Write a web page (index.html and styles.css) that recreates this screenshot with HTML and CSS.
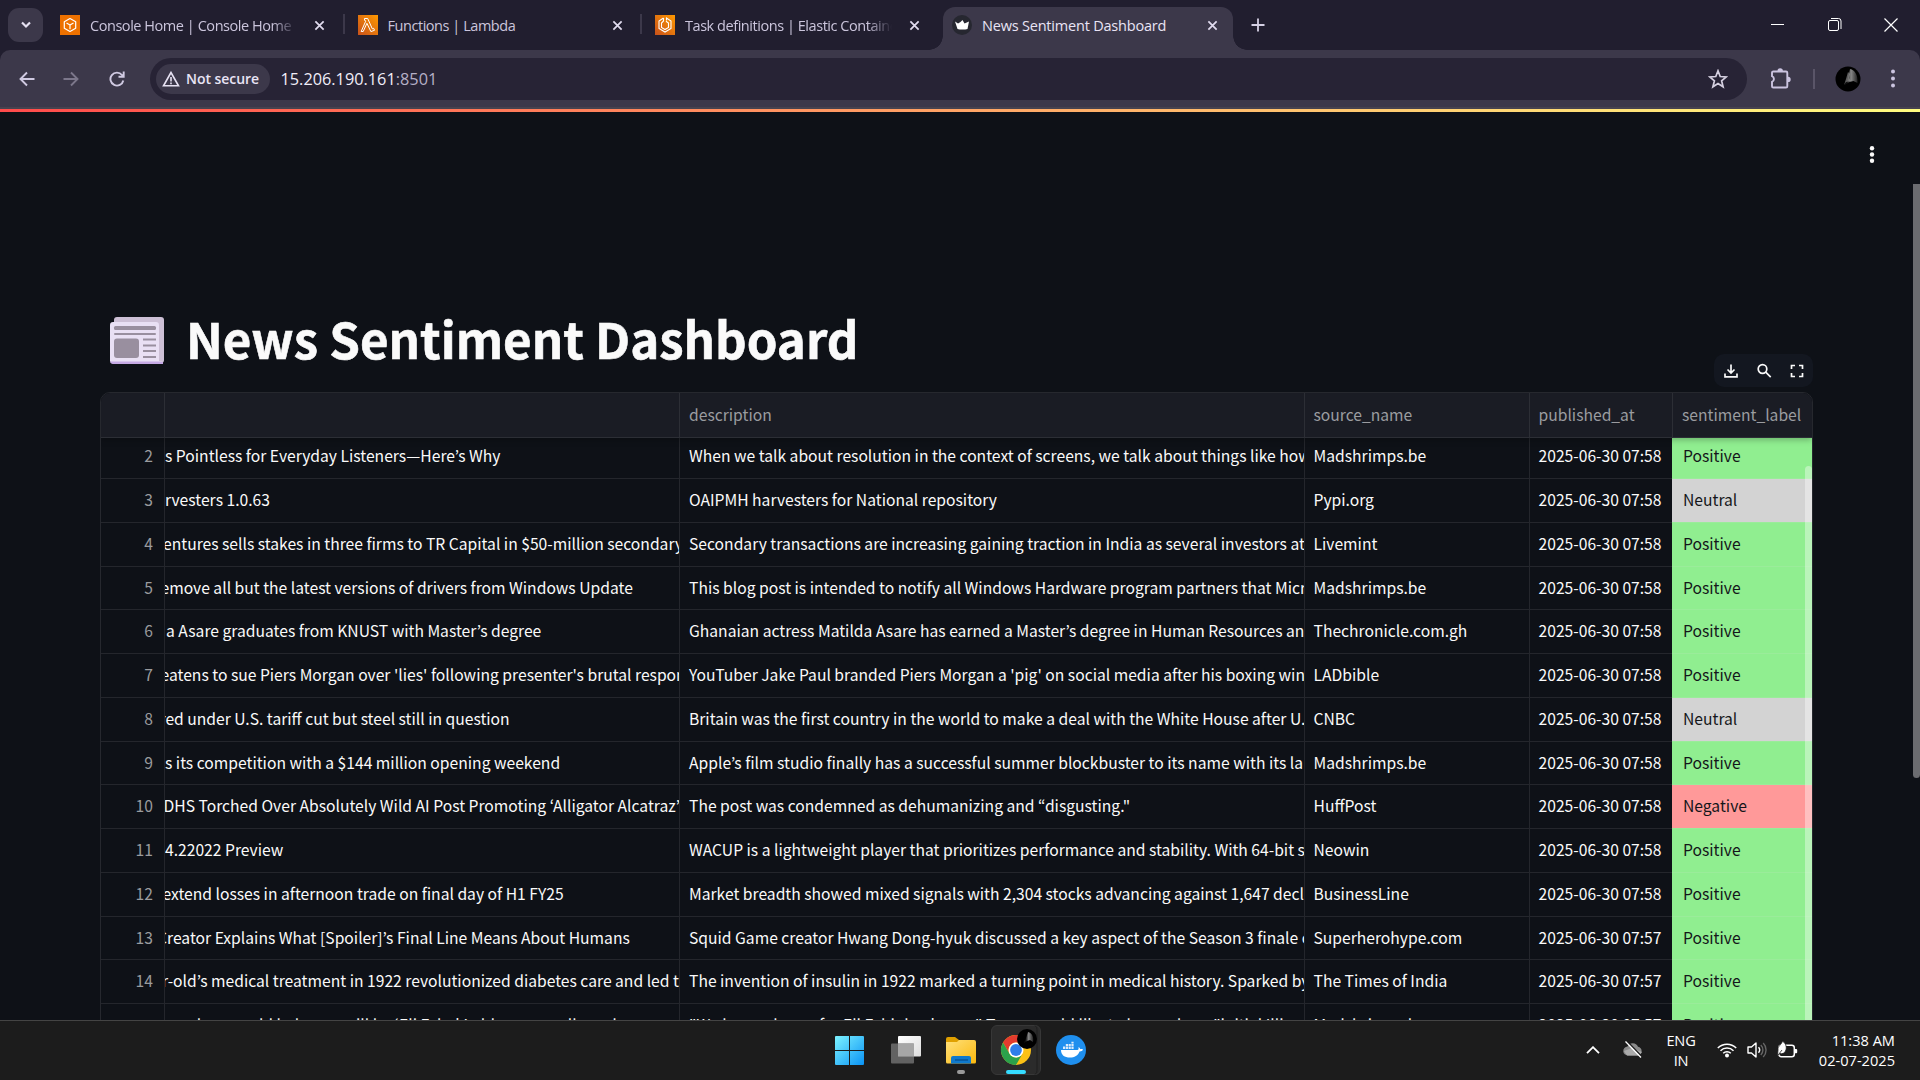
FILE: index.html
```html
<!DOCTYPE html>
<html lang="en">
<head>
<meta charset="utf-8">
<title>News Sentiment Dashboard</title>
<link rel="stylesheet" href="styles.css">
</head>
<body>
<div class="screen">
  <header class="tabstrip">
    <div class="tab-search"><svg width="12" height="12" viewBox="0 0 12 12"><path d="M2 3.5l4 4 4-4" fill="none" stroke="#e6e1f2" stroke-width="2.2"/></svg></div>
    <div class="tab">
      <svg class="fav" viewBox="0 0 20 20"><rect width="20" height="20" fill="#ed7100"/><g fill="none" stroke="#fff" stroke-width="1.2" stroke-linejoin="round"><path d="M10 3.5l5.7 3.2v6.6L10 16.5l-5.700-3.200V6.700z"/><path d="M6.500 8L10 10l3.500-2M10 10v4.200"/></g></svg>
      <span class="tab-title fade">Console Home | Console Home</span>
      <svg class="tab-x" viewBox="0 0 12 12"><path d="M1.500 1.500l9 9m0-9l-9 9"/></svg>
    </div>
    <div class="tab sep">
      <svg class="fav" viewBox="0 0 20 20"><defs><linearGradient id="aws" x1="0" y1="1" x2="1" y2="0"><stop offset="0" stop-color="#c8511b"/><stop offset="1" stop-color="#f90"/></linearGradient></defs><rect width="20" height="20" fill="url(#aws)"/><path d="M6.500 3.500h3.200l4.600 10.300 1.400-.5.8 2-3.600 1.300L8.900 8.300l-3.700 8.200H3.200L7.700 6.200l-.5-.9h-.7z" fill="none" stroke="#fff" stroke-width="1"/></svg>
      <span class="tab-title">Functions | Lambda</span>
      <svg class="tab-x" viewBox="0 0 12 12"><path d="M1.500 1.500l9 9m0-9l-9 9"/></svg>
    </div>
    <div class="tab sep">
      <svg class="fav" viewBox="0 0 20 20"><rect width="20" height="20" fill="url(#aws)"/><g fill="none" stroke="#fff" stroke-width="1.100"><path d="M8.500 3L4 6v7.500l6 3.500 6-3.500V6l-4.500-3v2.500"/><path d="M8.500 3v3L6.500 8v4.500L10 14.500l3.500-2V8L11 6.200"/></g></svg>
      <span class="tab-title fade">Task definitions | Elastic Container</span>
      <svg class="tab-x" viewBox="0 0 12 12"><path d="M1.500 1.500l9 9m0-9l-9 9"/></svg>
    </div>
    <div class="tab active">
      <svg class="fav" viewBox="0 0 20 20"><circle cx="10" cy="10" r="10" fill="#262730"/><path d="M3 6.500l3 2 2.500-1.500L10.500 5l2 3.500L17 6.500 15.500 14c-2.500.8-7.500.8-10 0z" fill="#fff"/></svg>
      <span class="tab-title">News Sentiment Dashboard</span>
      <svg class="tab-x" viewBox="0 0 12 12"><path d="M1.500 1.500l9 9m0-9l-9 9"/></svg>
    </div>
    <svg class="new-tab" viewBox="0 0 14 14"><path d="M7 .5v13M.5 7h13" stroke="#d5d0e4" stroke-width="1.800"/></svg>
    <div class="window-buttons">
      <svg width="14" height="14" viewBox="0 0 14 14"><path d="M0 6.500h13" stroke="#fff"/></svg>
      <svg width="14" height="14" viewBox="0 0 14 14" fill="none" stroke="#fff"><rect x=".5" y="2.500" width="10" height="10" rx="1.500"/><path d="M3 .5h7.500a2.500 2.500 0 0 1 2.500 2.500V11"/></svg>
      <svg width="14" height="14" viewBox="0 0 14 14"><path d="M.5.500l13 13m0-13l-13 13" stroke="#fff" stroke-width="1.200"/></svg>
    </div>
  </header>

  <div class="toolbar">
    <svg class="nav" viewBox="0 0 16 16"><path d="M15.500 8H1.500M8 1.500L1.500 8 8 14.500"/></svg>
    <svg class="nav dim" viewBox="0 0 16 16"><path d="M.5 8h14M8 1.500L14.500 8 8 14.500"/></svg>
    <svg class="nav" viewBox="0 0 16 16"><path d="M14.300 9.500A6.500 6.500 0 1 1 13 4l1.500 1.700M14.700.5v5.300H9.500"/></svg>
    <div class="omnibox">
      <div class="chip">
        <svg width="18" height="16" viewBox="0 0 18 16"><path d="M9 1.500L1.500 14.800h15z" fill="none" stroke="#e6e1f2" stroke-width="1.600"/><path d="M9 6v4.500M9 11.500v1.800" stroke="#e6e1f2" stroke-width="1.600"/></svg>
        <span>Not secure</span>
      </div>
      <span class="url">15.206.190.161<span class="port">:8501</span></span>
      <svg class="star" viewBox="0 0 20 20"><path d="M10 1.800l2.200 5.700 6.100.4-4.700 3.900 1.500 6L10 14.500l-5.100 3.300 1.500-6L1.700 7.900l6.100-.4z" fill="none" stroke="#d5d0e0" stroke-width="1.700"/></svg>
    </div>
    <svg class="puzzle" viewBox="0 0 22 22"><path d="M3.500 3.500h12.500a1.300 1.300 0 0 1 1.300 1.300v13.400a1.300 1.300 0 0 1-1.300 1.300H3.300A1.300 1.300 0 0 1 2 18.200v-4.400a3 3 0 0 0 0-5.600V4.800a1.300 1.300 0 0 1 1.500-1.300z" fill="none" stroke="#cbc4e0" stroke-width="1.900"/><path d="M7.500 3a2.700 2.700 0 0 1 5.400 0zM18 8.700a2.600 2.600 0 0 1 0 5.400z" fill="#cbc4e0"/></svg>
    <div class="bar"></div>
    <svg class="avatar" viewBox="0 0 26 26"><defs><linearGradient id="av"><stop offset=".2" stop-color="#111"/><stop offset=".5" stop-color="#888"/><stop offset="1" stop-color="#222"/></linearGradient></defs><circle cx="13" cy="13" r="12.500" fill="#000"/><path d="M15 3c5 1 8 6 7.500 14l-4-2-4 1-5 3 3-6z" fill="url(#av)"/><path d="M13 6l2 2-1 4 2 3-5 1-2 3 2-6z" fill="#999" opacity=".6"/></svg>
    <svg class="kebab" viewBox="0 0 6 22" fill="#cbc4e0"><circle cx="3" cy="3.500" r="2"/><circle cx="3" cy="10.500" r="2"/><circle cx="3" cy="17.500" r="2"/></svg>
  </div>

  <main class="page">
    <div class="decoration"></div>
    <div class="app-header"><svg width="6" height="20" viewBox="0 0 6 20" fill="#fafafa"><circle cx="3" cy="3.300" r="2.200"/><circle cx="3" cy="9.500" r="2.200"/><circle cx="3" cy="15.700" r="2.200"/></svg></div>
    <h1>
      <svg class="news" viewBox="0 0 54 47"><rect x="4" width="50" height="46" rx="3" fill="#cdc0d6"/><path d="M0 8a3 3 0 0 1 3-3h43a3 3 0 0 1 3 3v36l4 1v1.500H3A3 3 0 0 1 0 44z" fill="#e9e0f4"/><path d="M0 44.500h49l4 .5v2H3a3 3 0 0 1-3-2.500z" fill="#c5a9e4"/><g fill="#998f9f"><rect x="4" y="9" width="42" height="4" rx="1.500"/><rect x="4" y="16" width="42" height="2" rx="1"/><rect x="4" y="21.500" width="25" height="19.500" rx="3"/><rect x="33" y="21.500" width="13" height="2"/><rect x="33" y="27.500" width="13" height="2"/><rect x="33" y="33" width="13" height="2"/><rect x="33" y="39" width="13" height="2"/></g></svg>
      <span>News Sentiment Dashboard</span>
    </h1>
    <div class="table-tools">
      <svg viewBox="0 0 16 16"><path d="M8 1.500v8M4.500 6.500L8 10l3.500-3.500M2 10.500v3.300h12v-3.300"/></svg>
      <svg viewBox="0 0 16 16"><circle cx="6.500" cy="6" r="4.300"/><path d="M9.700 9.200l5 5"/></svg>
      <svg viewBox="0 0 16 16"><path d="M2.500 6V2.500H6M10 2.500h3.500V6M13.500 10v3.500H10M6 13.500H2.500V10"/></svg>
    </div>

    <section class="table">
      <div class="row head"><div></div><div></div><div>description</div><div>source_name</div><div>published_at</div><div>sentiment_label</div></div>
      <div class="body">
        <div class="row"><div>2</div><div><span>s Pointless for Everyday Listeners—Here’s Why</span></div><div>When we talk about resolution in the context of screens, we talk about things like how</div><div>Madshrimps.be</div><div>2025-06-30 07:58</div><div class="pos">Positive</div></div>
        <div class="row"><div>3</div><div><span>rvesters 1.0.63</span></div><div>OAIPMH harvesters for National repository</div><div>Pypi.org</div><div>2025-06-30 07:58</div><div class="neu">Neutral</div></div>
        <div class="row"><div>4</div><div><span class="o4">entures sells stakes in three firms to TR Capital in $50-million secondary</span></div><div>Secondary transactions are increasing gaining traction in India as several investors at</div><div>Livemint</div><div>2025-06-30 07:58</div><div class="pos">Positive</div></div>
        <div class="row"><div>5</div><div><span class="o5">emove all but the latest versions of drivers from Windows Update</span></div><div>This blog post is intended to notify all Windows Hardware program partners that Micro</div><div>Madshrimps.be</div><div>2025-06-30 07:58</div><div class="pos">Positive</div></div>
        <div class="row"><div>6</div><div><span class="o6">a Asare graduates from KNUST with Master’s degree</span></div><div>Ghanaian actress Matilda Asare has earned a Master’s degree in Human Resources an</div><div>Thechronicle.com.gh</div><div>2025-06-30 07:58</div><div class="pos">Positive</div></div>
        <div class="row"><div>7</div><div><span class="o7">eatens to sue Piers Morgan over 'lies' following presenter's brutal respon</span></div><div>YouTuber Jake Paul branded Piers Morgan a 'pig' on social media after his boxing win</div><div>LADbible</div><div>2025-06-30 07:58</div><div class="pos">Positive</div></div>
        <div class="row"><div>8</div><div><span class="o8">red under U.S. tariff cut but steel still in question</span></div><div>Britain was the first country in the world to make a deal with the White House after U.</div><div>CNBC</div><div>2025-06-30 07:58</div><div class="neu">Neutral</div></div>
        <div class="row"><div>9</div><div><span>s its competition with a $144 million opening weekend</span></div><div>Apple’s film studio finally has a successful summer blockbuster to its name with its la</div><div>Madshrimps.be</div><div>2025-06-30 07:58</div><div class="pos">Positive</div></div>
        <div class="row"><div>10</div><div><span class="o10">DHS Torched Over Absolutely Wild AI Post Promoting ‘Alligator Alcatraz’</span></div><div>The post was condemned as dehumanizing and “disgusting."</div><div>HuffPost</div><div>2025-06-30 07:58</div><div class="neg">Negative</div></div>
        <div class="row"><div>11</div><div><span>4.22022 Preview</span></div><div>WACUP is a lightweight player that prioritizes performance and stability. With 64-bit s</div><div>Neowin</div><div>2025-06-30 07:58</div><div class="pos">Positive</div></div>
        <div class="row"><div>12</div><div><span class="o12">extend losses in afternoon trade on final day of H1 FY25</span></div><div>Market breadth showed mixed signals with 2,304 stocks advancing against 1,647 decl</div><div>BusinessLine</div><div>2025-06-30 07:58</div><div class="pos">Positive</div></div>
        <div class="row"><div>13</div><div><span class="o13">Creator Explains What [Spoiler]’s Final Line Means About Humans</span></div><div>Squid Game creator Hwang Dong-hyuk discussed a key aspect of the Season 3 finale o</div><div>Superherohype.com</div><div>2025-06-30 07:57</div><div class="pos">Positive</div></div>
        <div class="row"><div>14</div><div><span class="o14">r-old’s medical treatment in 1922 revolutionized diabetes care and led t</span></div><div>The invention of insulin in 1922 marked a turning point in medical history. Sparked by</div><div>The Times of India</div><div>2025-06-30 07:57</div><div class="pos">Positive</div></div>
        <div class="row"><div></div><div><span class="o15">can be a world balancer will be ‘Eli Eshak’ older cause all are done</span></div><div>"We have a home for Eli Eshinbackwear" Team would like to be made as "initial Illi</div><div>Madshrimps.be</div><div>2025-06-30 07:57</div><div class="pos">Positive</div></div>
        <div class="table-scroll"></div>
      </div>
    </section>
    <div class="page-scroll"></div>
  </main>

  <footer class="taskbar">
    <div class="apps">
      <svg class="win" viewBox="0 0 29 29"><defs><linearGradient id="w" x1="0" y1="0" x2="1" y2="1"><stop offset="0" stop-color="#7df3ff"/><stop offset="1" stop-color="#0a93f5"/></linearGradient></defs><path d="M0 1a1 1 0 0 1 1-1h13v14H0zM15 0h13a1 1 0 0 1 1 1v13H15zM0 15h14v14H1a1 1 0 0 1-1-1zM15 15h14v13a1 1 0 0 1-1 1H15z" fill="url(#w)"/></svg>
      <svg class="view" viewBox="0 0 30 28"><defs><linearGradient id="tv" x1="0" y1="0" x2="1" y2="1"><stop offset="0" stop-color="#fff"/><stop offset="1" stop-color="#ddd"/></linearGradient></defs><rect x="7" width="23" height="20.500" rx="1" fill="url(#tv)"/><rect y="7.500" width="23" height="20" rx="1" fill="#6a6a6a" opacity=".9"/><path d="M7 7.500h16v13H7z" fill="#a6a6a6"/></svg>
      <svg class="folder" viewBox="0 0 30 44"><defs><linearGradient id="f" x1="0" y1="0" x2="1" y2="1"><stop offset="0" stop-color="#ffe07a"/><stop offset="1" stop-color="#fbb90e"/></linearGradient></defs><path d="M0 3a2 2 0 0 1 2-2h7l4 3v6H0z" fill="#e0a000"/><path d="M0 6h11l2-2h15a2 2 0 0 1 2 2v20a1.500 1.500 0 0 1-1.500 1.500h-27A1.500 1.500 0 0 1 0 26z" fill="url(#f)"/><path d="M5 27.500V22a2 2 0 0 1 2-2h16a2 2 0 0 1 2 2v5.500z" fill="#0f79cc"/><path d="M9 24h13" stroke="#054a8c" stroke-width="1.200"/><rect x="11" y="34" width="8" height="4" rx="2" fill="#9a9a9a"/></svg>
      <div class="chrome">
        <svg viewBox="0 0 50 50"><path d="M44 .5q2 1.500 2 4v41q0 2.500-2 4" fill="none" stroke="#1f1f1f"/><circle cx="25" cy="25" r="15" fill="#fbc116"/><path d="M12 17.500a15 15 0 0 1 26 0H25a7.500 7.500 0 0 0-6.500 11.200z" fill="#e33b2e"/><path d="M12 17.500a15 15 0 0 0 13 22.500l6.500-11.300a7.500 7.500 0 0 1-13 0z" fill="#2ba14b"/><circle cx="25" cy="25" r="7.500" fill="#fff"/><circle cx="25" cy="25" r="5.900" fill="#2f7de9"/><circle cx="36" cy="14" r="10" fill="#000"/><path d="M37 7c4 1 6 5 5 10l-3-2-3 1-3 2 2-5z" fill="url(#av)"/><rect x="15" y="45" width="20" height="4" rx="2" fill="#35dcff"/></svg>
      </div>
      <svg class="docker" viewBox="0 0 30 30"><circle cx="15" cy="15" r="15" fill="#1f8fee"/><path d="M5 15h16.500c1-.1 1.300-1 1-3 1 .5 1.700 1.500 1.700 2.200 1-.2 2-.1 2.800.4-.6 1.500-2 2-3.500 1.900C22 20.500 18.500 22.500 14 22.500c-5.500 0-9-2.500-9-7.500z" fill="#fff"/><path d="M7 11.500h2.200V14H7zM9.800 11.500H12V14H9.800zM12.600 11.500h2.200V14h-2.200zM15.400 11.500h2.200V14h-2.200zM9.800 9H12v2H9.800zM12.600 9h2.200v2h-2.200zM15.400 9h2.200v2h-2.200zM15.400 6.700h2.200v1.800h-2.200z" fill="#dcecfb"/></svg>
    </div>
    <div class="tray">
      <svg class="chev" viewBox="0 0 14 8"><path d="M1 7.200l6-6 6 6" fill="none" stroke="#fff" stroke-width="1.800"/></svg>
      <svg class="cloud" viewBox="0 0 20 17"><path d="M5 14.500a4.500 4.500 0 0 1-.5-9A5.800 5.800 0 0 1 15 5.800a4.500 4.500 0 0 1 .5 8.700z" fill="#8b8b8b"/><path d="M1 10l8-3 10 4-3 3.500H4z" fill="#aaa"/><path d="M3.800 0l15.500 16" stroke="#1c1c1c" stroke-width="1.500"/><path d="M2.500 .5L18 16.500" stroke="#fff" stroke-width="1.300"/></svg>
      <div class="lang"><span>ENG</span><span>IN</span></div>
      <svg class="wifi" viewBox="0 0 20 16"><g fill="none" stroke="#fff" stroke-width="1.500"><path d="M.8 6a13 13 0 0 1 18.400 0M3.500 8.700a9.200 9.200 0 0 1 13 0M6.200 11.300a5.400 5.400 0 0 1 7.600 0"/></g><circle cx="10" cy="13.500" r="2" fill="#fff"/></svg>
      <svg class="vol" viewBox="0 0 20 18"><g fill="none" stroke="#fff" stroke-width="1.400"><path d="M1 6h3.500L9 2v14l-4.500-4H1z" stroke-linejoin="round"/><path d="M11.500 6.300a4 4 0 0 1 0 5.400"/><path d="M13.800 4a7 7 0 0 1 0 10M16.200 2a10 10 0 0 1 0 14" stroke="#666"/></g></svg>
      <svg class="bat" viewBox="0 0 21 18"><rect x="1.800" y="4.300" width="15.500" height="11.500" rx="2.500" fill="none" stroke="#fff" stroke-width="1.500"/><path d="M18 8h1.200a1 1 0 0 1 1 1v2.200a1 1 0 0 1-1 1H18z" fill="#fff"/><path d="M5.500 0C9.500 3 10 7 8.500 10 7.500 12.500 5 13 3 12.500L.5 14.500 1 9C.5 5 4.500 4 5.500 0z" fill="#fff" stroke="#1c1c1c" stroke-width=".8"/><path d="M1.500 13.500L5 9" stroke="#1c1c1c" stroke-width=".8"/></svg>
      <div class="clock"><span>11:38 AM</span><span>02-07-2025</span></div>
    </div>
  </footer>
</div>
</body>
</html>
```
FILE: styles.css
```css
* { box-sizing: border-box; }
body { margin: 0; background: #0e1117; overflow: hidden; font-family: "Open Sans", "Noto Sans", sans-serif; }
svg { display: block; flex: none; }
.screen { width: 1920px; height: 1080px; display: flex; flex-direction: column; background: #211e2f; }

/* browser tab strip */
.tabstrip { height: 50px; background: #211e2f; display: flex; align-items: center; padding-left: 8px; }
.tab-search { width: 35px; height: 34px; border-radius: 11px; background: #3c384a; display: flex; align-items: center; justify-content: center; margin-right: 4px; }
.tab { width: 297.500px; height: 34px; display: flex; align-items: center; padding-left: 13px; position: relative; }
.tab.sep::before { content: ""; position: absolute; left: -2px; top: 6px; width: 2px; height: 20px; background: #3c384a; }
.fav { width: 20px; height: 20px; margin-right: 10px; }
.tab-title { width: 212px; white-space: nowrap; overflow: hidden; font-size: 14.500px; line-height: 20px; padding-top: 1px; color: #cbc5dc; letter-spacing: -0.45px; margin-right: 12px; }
.fade { width: 207px; margin-right: 17px; -webkit-mask-image: linear-gradient(90deg, #000 88%, transparent); mask-image: linear-gradient(90deg, #000 88%, transparent); }
.tab-x { width: 11px; height: 11px; stroke: #e0dbee; stroke-width: 1.900; }
.tab.active { width: 290px; height: 43px; margin: 7px 0 0 3.500px; padding: 0 0 7px 9px; background: #3c384a; border-radius: 12px 12px 0 0; }
.tab.active .tab-title { color: #e9e4f5; width: 213px; letter-spacing: -0.200px; }
.tab.active::before, .tab.active::after { content: ""; position: absolute; bottom: 0; width: 14px; height: 14px; }
.tab.active::before { left: -14px; background: radial-gradient(circle at 0 0, transparent 13.500px, #3c384a 14px); }
.tab.active::after { right: -14px; background: radial-gradient(circle at 100% 0, transparent 13.500px, #3c384a 14px); }
.new-tab { width: 14px; height: 14px; margin-left: 18px; }
.window-buttons { margin-left: auto; display: flex; gap: 42.500px; padding-right: 22px; }

/* address bar */
.toolbar { height: 59px; background: #3c384a; display: flex; align-items: center; padding: 0 24px 0 19px; border-bottom: 2px solid #47434f; border-radius: 10px 10px 0 0; }
.nav { width: 16px; height: 16px; fill: none; stroke: #d0cae2; stroke-width: 1.900; margin-right: 28px; }
.dim { stroke: #7c778b; margin-right: 30px; }
.omnibox { flex: 1; height: 42px; margin: 0 23px 0 -3px; border-radius: 21px; background: #272335; display: flex; align-items: center; padding: 0 19px 0 6px; }
.chip { width: 114px; height: 30px; border-radius: 15px; background: #3c384a; display: flex; align-items: center; gap: 6px; padding-left: 6px; font-size: 14px; font-weight: 600; letter-spacing: -.05px; color: #e9e4f5; white-space: nowrap; }
.url { margin: 1px 0 0 10.500px; font-size: 16.300px; color: #f0edf8; white-space: nowrap; }
.port { color: #b5afc6; }
.star { width: 20px; height: 20px; margin-left: auto; }
.puzzle { width: 22px; height: 22px; }
.bar { width: 2px; height: 20px; background: #5a5568; margin: 0 20px 0 21px; }
.avatar { width: 26px; height: 26px; }
.kebab { width: 6px; height: 22px; margin-left: 29px; }

/* app page */
.page { flex: 1; min-height: 0; overflow: hidden; position: relative; background: #0e1117; font-family: "Noto Sans CJK KR", "Noto Sans", sans-serif; color: #fafafa; display: flex; flex-direction: column; }
.decoration { height: 3px; flex: none; background: linear-gradient(90deg, #ff4b4b, #fffd80); }
.app-header { display: flex; justify-content: flex-end; padding: 33px 45px 0 0; height: 53px; flex: none; }
h1 { margin: 135px 0 0 110px; height: 80px; flex: none; display: flex; align-items: center; gap: 22px; font-size: 49.200px; font-weight: 700; line-height: 80px; white-space: nowrap; }
h1 span { height: 84px; -webkit-text-stroke: .6px #fafafa; }
.news { width: 54px; height: 47px; }
.table-tools { margin: -26px 107px 5px auto; width: 99px; height: 33px; flex: none; border-radius: 10px; background: #131720; display: flex; align-items: center; justify-content: space-between; padding: 0 8px 0 9px; }
.table-tools svg { width: 16px; height: 16px; fill: none; stroke: #fafafa; stroke-width: 1.700; }
.table { width: 1713px; height: 640px; margin-left: 100px; flex: none; border: 1px solid #26282e; border-radius: 10px 10px 0 0; overflow: hidden; font-size: 15.670px; }
.row { display: grid; grid-template-columns: 64px 515px 624.500px 225px 143.500px 139px; height: 43.750px; line-height: 42.200px; }
.row > div { border-right: 1px solid #24262c; border-bottom: 1px solid #24262c; padding-left: 9px; overflow: hidden; white-space: nowrap; }
.row > div:nth-child(1) { text-align: right; padding: 0 11px 0 0; color: #9a9b9e; }
.row > div:nth-child(2) { padding-left: 0; }
.row > div:nth-child(6) { border-right: 0; }
.head { height: 45px; background: #1a1c24; color: #9b9ca0; position: relative; z-index: 2; box-shadow: 0 2px 6px rgba(0, 0, 0, .25); }
.head > div { border-color: #2c2e35; line-height: 44px; }
.body { margin-top: -2.750px; position: relative; }
.body .row > div:nth-child(6) { margin-left: -1px; padding-left: 11px; color: #14161a; border-color: #9aec9a; }
.row span { display: inline-block; }
.row > div.pos { background: #90ee90; }
.row > div.neu { background: #d3d3d3; }
.row > div.neg { background: #ff9999; }
.table-scroll { position: absolute; right: 0; top: 31px; bottom: -40px; width: 7px; background: rgba(255, 255, 255, .38); border-radius: 4px 4px 0 0; }
.page-scroll { position: absolute; right: 0; top: 75px; width: 7px; height: 594px; background: #6b6c70; border-radius: 0 0 4px 4px; }

/* horizontally scrolled title column */
.o4 { margin-left: -2px; }
.o12 { margin-left: -2.500px; }
.o5, .o7 { margin-left: -4.500px; }
.o6 { margin-left: 1px; }
.o8 { margin-left: -5.500px; }
.o10 { margin-left: -1.500px; }
.o13 { margin-left: -8px; }
.o14 { margin-left: -3px; }
.o15 { margin-left: 2px; }

/* taskbar */
.taskbar { height: 60px; flex: none; background: #1c1c1c; border-top: 1px solid #444; display: flex; align-items: center; color: #fff; }
.apps { display: flex; align-items: center; margin-left: 835px; width: 252px; height: 59px; padding-bottom: 1px; }
.win { width: 29px; height: 29px; }
.view { width: 30px; height: 28px; margin-left: 27px; }
.folder { width: 30px; height: 44px; margin: 16px 0 0 25px; }
.chrome { width: 50px; height: 50px; margin-left: 15px; border-radius: 6px; background: #2b2b2b; border: 1px solid #373737; }
.chrome svg { width: 50px; height: 50px; margin: -1px; }
.docker { width: 30px; height: 30px; margin-left: 15px; }
.tray { margin-left: auto; padding: 0 25px 2px 0; display: flex; align-items: center; font-size: 14.600px; line-height: 20px; }
.chev { width: 14px; height: 8px; margin-right: 23px; }
.cloud { width: 20px; height: 17px; }
.lang, .clock { display: flex; flex-direction: column; white-space: nowrap; }
.lang { width: 36px; margin: 0 18px 0 20px; align-items: center; letter-spacing: -.2px; }
.wifi { width: 20px; height: 16px; margin-right: 10px; }
.vol { width: 20px; height: 18px; margin-right: 10px; }
.bat { width: 21px; height: 18px; }
.clock { width: 97px; align-items: flex-end; }
```
